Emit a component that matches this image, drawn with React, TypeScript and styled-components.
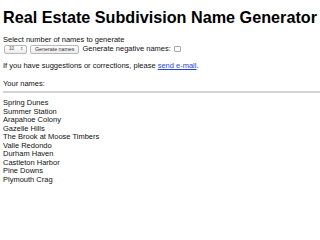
import React from "react";
import styled, { createGlobalStyle } from "styled-components";

const GlobalStyle = createGlobalStyle`
  html, body {
    margin: 0;
    padding: 0;
    background: #ffffff;
  }
  body {
    font-family: "Liberation Sans", Arial, sans-serif;
    color: #111111;
  }
`;

const Page = styled.div`
  padding: 8px 0 0 3px;
  font-size: 7.5px;
  line-height: 8.5px;
`;

const Title = styled.h1`
  margin: 0 0 10px;
  font-size: 16.2px;
  line-height: 18px;
  font-weight: bold;
  color: #000;
`;

const Label = styled.div`
  line-height: 8px;
`;

const ControlRow = styled.div`
  display: flex;
  align-items: center;
  gap: 3px;
  height: 10px;
`;

const SelectBox = styled.div`
  display: flex;
  align-items: center;
  justify-content: space-between;
  width: 14px;
  height: 7px;
  padding: 0 3px 0 4px;
  margin-left: 1px;
  border: 1px solid #b8b8b8;
  border-radius: 2px;
  background: linear-gradient(#ffffff, #ececec);
  font-size: 4.6px;
  color: #444;
`;

const Arrows = styled.span`
  font-size: 4px;
  color: #666;
`;

const Button = styled.div`
  display: flex;
  align-items: center;
  height: 7px;
  padding: 0 4px;
  border: 1px solid #b8b8b8;
  border-radius: 2px;
  background: linear-gradient(#ffffff, #ececec);
  font-size: 5.3px;
  color: #333;
`;

const Check = styled.span`
  display: inline-block;
  width: 5px;
  height: 4px;
  border: 1px solid #aaa;
  border-radius: 1px;
  background: #fafafa;
`;

const Paragraph = styled.p<{ $top: number }>`
  margin: ${(p) => p.$top}px 0 0;
`;

const MailLink = styled.a`
  color: #2346d8;
  text-decoration: underline;
`;

const Rule = styled.div`
  height: 2px;
  background: #d4d4d4;
  margin: 3px 0 6px;
`;

const NameList = styled.div`
  display: flex;
  flex-direction: column;
`;

const names = [
  "Spring Dunes",
  "Summer Station",
  "Arapahoe Colony",
  "Gazelle Hills",
  "The Brook at Moose Timbers",
  "Valle Redondo",
  "Durham Haven",
  "Castleton Harbor",
  "Pine Downs",
  "Plymouth Crag",
];

export default function App() {
  return (
    <>
      <GlobalStyle />
      <Page>
        <Title>Real Estate Subdivision Name Generator</Title>
        <Label>Select number of names to generate</Label>
        <ControlRow>
          <SelectBox>
            <span>10</span>
            <Arrows>⇕</Arrows>
          </SelectBox>
          <Button>Generate names</Button>
          <span>Generate negative names:</span>
          <Check />
        </ControlRow>
        <Paragraph $top={8}>
          If you have suggestions or corrections, please{" "}
          <MailLink href="#">send e-mail</MailLink>.
        </Paragraph>
        <Paragraph $top={9}>Your names:</Paragraph>
        <Rule />
        <NameList>
          {names.map((n) => (
            <span key={n}>{n}</span>
          ))}
        </NameList>
      </Page>
    </>
  );
}
